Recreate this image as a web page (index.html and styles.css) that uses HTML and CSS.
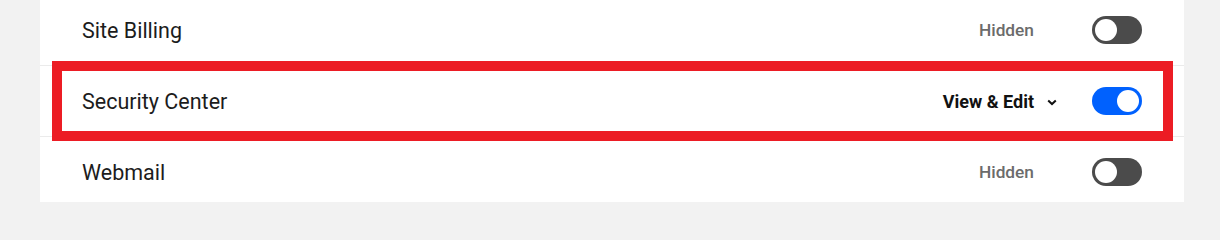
FILE: index.html
```html
<!DOCTYPE html>
<html>
<head>
<meta charset="utf-8">
<link rel="stylesheet" href="styles.css">
</head>
<body>
<div class="page">
  <div class="panel">
    <div class="row">
      <div class="inner">
        <span class="label">Site Billing</span>
        <span class="access hidden">Hidden</span>
        <span class="toggle off"><span class="knob"></span></span>
      </div>
    </div>
    <div class="row highlighted">
      <div class="inner">
        <span class="label">Security Center</span>
        <span class="access edit">View &amp; Edit
          <svg class="chev" width="10" height="7" viewBox="0 0 10 7"><path d="M1.2 1.4 L5 5 L8.8 1.4" fill="none" stroke="#111" stroke-width="2"/></svg>
        </span>
        <span class="toggle on"><span class="knob"></span></span>
      </div>
    </div>
    <div class="row">
      <div class="inner">
        <span class="label">Webmail</span>
        <span class="access hidden">Hidden</span>
        <span class="toggle off"><span class="knob"></span></span>
      </div>
    </div>
  </div>
</div>
</body>
</html>
```
FILE: styles.css
```css
* { box-sizing: border-box; }
html, body { margin: 0; padding: 0; }
html { height: 202px; overflow: hidden; }
body {
  background: #f2f2f2;
  font-family: Roboto, "Liberation Sans", sans-serif;
  height: 202px;
  overflow: hidden;
}
.page {
  padding: 0 36px 0 40px;
  margin-top: -5px;
}
.panel {
  background: #fff;
  height: 207px;
  overflow: hidden;
}
.row {
  height: 71px;
  border-bottom: 1px solid #ebebeb;
  padding: 0 11px 0 12px;
  display: flex;
  align-items: stretch;
}
.row .inner {
  flex: 1;
  display: flex;
  align-items: center;
  padding: 0 21px 0 20px;
  border: 10px solid transparent;
  margin: -5px 0 -5px 0;
}
.row.highlighted .inner {
  border-color: #ec1c24;
}
.label {
  flex: 1;
  font-size: 21.5px;
  color: #1c1c1c;
}
.access {
  font-size: 17.3px;
  font-weight: 500;
  margin-right: 58px;
}
.access.hidden { color: #6b6b6b; }
.access.edit {
  color: #111;
  font-size: 18px;
  font-weight: 700;
  margin-right: 35px;
  display: flex;
  align-items: center;
  gap: 13px;
}
.chev { margin-top: 3px; }
.toggle {
  width: 50px;
  height: 28px;
  border-radius: 14px;
  display: flex;
  align-items: center;
  padding: 0 3px;
}
.toggle.off { background: #4b4b4b; }
.toggle.on { background: #0061fe; justify-content: flex-end; }
.knob {
  width: 22px;
  height: 22px;
  border-radius: 50%;
  background: #fff;
}
```
